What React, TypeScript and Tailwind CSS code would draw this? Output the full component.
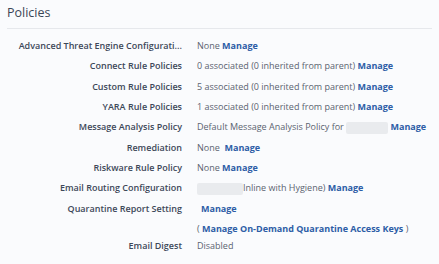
import React from "react";

const Blur = ({ w }: { w: string }) => (
  <span className={`inline-block align-middle h-[12px] ${w} rounded-[2px] bg-[#e9ebee]`} />
);

const Manage = ({ children = "Manage" }: { children?: React.ReactNode }) => (
  <a className="font-bold text-[#2d5da6] cursor-pointer">{children}</a>
);

const ROWS: { label: string; value: React.ReactNode }[] = [
  {
    label: "Advanced Threat Engine Configurati...",
    value: (
      <>
        None <Manage />
      </>
    ),
  },
  {
    label: "Connect Rule Policies",
    value: (
      <>
        0 associated (0 inherited from parent) <Manage />
      </>
    ),
  },
  {
    label: "Custom Rule Policies",
    value: (
      <>
        5 associated (0 inherited from parent) <Manage />
      </>
    ),
  },
  {
    label: "YARA Rule Policies",
    value: (
      <>
        1 associated (0 inherited from parent) <Manage />
      </>
    ),
  },
  {
    label: "Message Analysis Policy",
    value: (
      <>
        Default Message Analysis Policy for <Blur w="w-[42px]" /> <Manage />
      </>
    ),
  },
  {
    label: "Remediation",
    value: (
      <>
        None&nbsp; <Manage />
      </>
    ),
  },
  {
    label: "Riskware Rule Policy",
    value: (
      <>
        None <Manage />
      </>
    ),
  },
  {
    label: "Email Routing Configuration",
    value: (
      <>
        <Blur w="w-[46px]" />
        Inline with Hygiene) <Manage />
      </>
    ),
  },
];

export default function App() {
  return (
    <div className="w-[439px] h-[264px] overflow-hidden bg-[#fafbfd] font-['Open_Sans',sans-serif] text-[9px] leading-[14px]">
      {/* Header */}
      <div className="px-[7px] pt-[4px]">
        <h2 className="text-[12.5px] leading-[18px] text-[#3a4656] font-normal">Policies</h2>
        <div className="mt-[6px] h-px bg-[#e6e8ec]" />
      </div>

      {/* Rows */}
      <div className="pt-[7px]">
        {ROWS.map((r) => (
          <div key={r.label} className="flex h-[20.3px] items-center">
            <div className="w-[182px] shrink-0 text-right font-semibold text-[#3d4859] whitespace-nowrap">
              {r.label}
            </div>
            <div className="pl-[15px] text-[#5b6370] whitespace-nowrap">{r.value}</div>
          </div>
        ))}
        <div className="flex h-[20.3px] items-center">
          <div className="w-[182px] shrink-0 text-right font-semibold text-[#3d4859] whitespace-nowrap">
            Quarantine Report Setting
          </div>
          <div className="pl-[19px] text-[#5b6370] whitespace-nowrap">
            <Manage />
          </div>
        </div>
        <div className="flex h-[20.3px] items-center">
          <div className="w-[182px] shrink-0" />
          <div className="pl-[15px] text-[#5b6370] whitespace-nowrap">
            ( <Manage>Manage On-Demand Quarantine Access Keys</Manage> )
          </div>
        </div>
        <div className="flex h-[14px] items-center">
          <div className="w-[182px] shrink-0 text-right font-semibold text-[#3d4859] whitespace-nowrap">
            Email Digest
          </div>
          <div className="pl-[15px] text-[#5b6370] whitespace-nowrap">Disabled</div>
        </div>
      </div>
    </div>
  );
}
